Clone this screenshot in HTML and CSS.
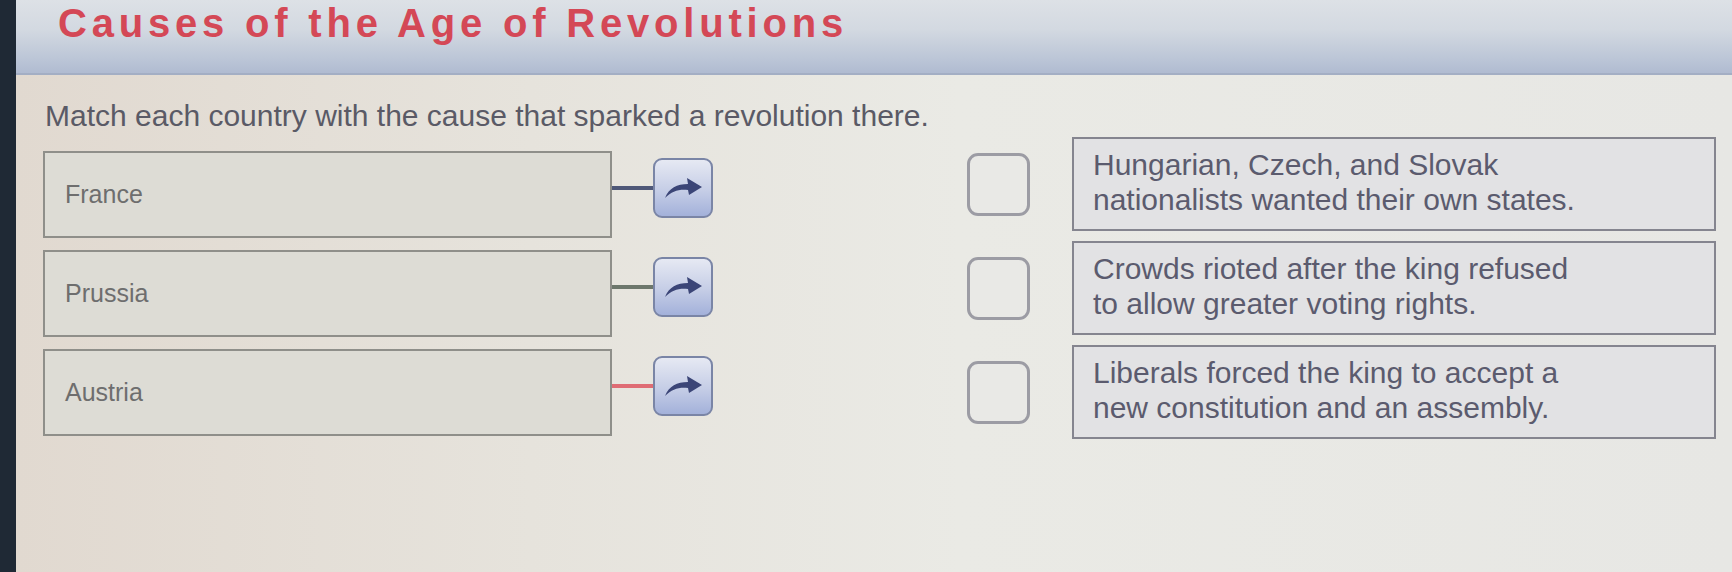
FILE: index.html
```html
<!DOCTYPE html>
<html>

<head>
    <meta charset="UTF-8">
    <meta name="viewport" content="width=device-width, initial-scale=1.0">
    <title>Causes of the Age of Revolutions</title>
    <link rel="stylesheet" href="styles.css">
</head>

<body>
    <div class="page">
        <header class="banner">
            <h1>Causes of the Age of Revolutions</h1>
        </header>

        <main class="content">
            <p class="prompt">Match each country with the cause that sparked a revolution there.</p>

            <div class="quiz">
                <!-- countries, each with a drag handle -->
                <div class="sources">
                    <div class="source">
                        <div class="label">France</div>
                        <div class="handle">
                            <span class="wire wire-blue"></span>
                            <button type="button" class="drag">
                                <svg viewBox="0 0 40 24" width="40" height="24"><path d="M2 22 C6 12 14 8 25 8 L24 2 L39 11 L26 19 L25 14 C16 13 9 15 2 22 Z" /></svg>
                            </button>
                        </div>
                    </div>
                    <div class="source">
                        <div class="label">Prussia</div>
                        <div class="handle">
                            <span class="wire wire-green"></span>
                            <button type="button" class="drag">
                                <svg viewBox="0 0 40 24" width="40" height="24"><path d="M2 22 C6 12 14 8 25 8 L24 2 L39 11 L26 19 L25 14 C16 13 9 15 2 22 Z" /></svg>
                            </button>
                        </div>
                    </div>
                    <div class="source">
                        <div class="label">Austria</div>
                        <div class="handle">
                            <span class="wire wire-red"></span>
                            <button type="button" class="drag">
                                <svg viewBox="0 0 40 24" width="40" height="24"><path d="M2 22 C6 12 14 8 25 8 L24 2 L39 11 L26 19 L25 14 C16 13 9 15 2 22 Z" /></svg>
                            </button>
                        </div>
                    </div>
                </div>

                <!-- causes, each with an empty drop slot -->
                <div class="targets">
                    <div class="target">
                        <span class="slot"></span>
                        <div class="answer">Hungarian, Czech, and Slovak<br>nationalists wanted their own states.</div>
                    </div>
                    <div class="target">
                        <span class="slot"></span>
                        <div class="answer">Crowds rioted after the king refused<br>to allow greater voting rights.</div>
                    </div>
                    <div class="target">
                        <span class="slot"></span>
                        <div class="answer">Liberals forced the king to accept a<br>new constitution and an assembly.</div>
                    </div>
                </div>
            </div>
        </main>
    </div>
</body>

</html>
```

FILE: styles.css
```css
body {
    margin: 0;
    background-color: #1f2935;
    font-family: "Liberation Sans", Arial, sans-serif;
}

.page {
    margin-left: 16px;
    min-height: 100vh;
    background: linear-gradient(90deg, #e1d9d0 0%, #e6e3dc 30%, #eaeae5 55%, #e7e7e4 100%);
}

.banner {
    height: 73px;
    padding-left: 42px;
    background: linear-gradient(180deg, #dde1e6 0%, #d3d9e1 40%, #bcc6d7 80%, #b0bbd1 100%);
    border-bottom: 2px solid #a3aec4;
}

.banner h1 {
    margin: 0;
    color: #d44856;
    font-size: 40px;
    line-height: 46px;
    font-weight: bold;
    letter-spacing: 4.8px;
}

.content {
    padding: 23px 16px 0 27px;
}

.prompt {
    margin: 0 0 3px 2px;
    color: #5a5a66;
    font-size: 30px;
    line-height: 36px;
}

.quiz {
    display: flex;
    justify-content: space-between;
}

.sources {
    display: flex;
    flex-direction: column;
    gap: 12px;
    margin-top: 14px;
}

.source {
    display: flex;
    align-items: flex-start;
}

.label {
    width: 569px;
    height: 87px;
    box-sizing: border-box;
    display: flex;
    align-items: center;
    padding-left: 20px;
    background-color: #dddcd5;
    border: 2px solid #8f8f8a;
    color: #6e6e6e;
    font-size: 25px;
}

.handle {
    display: flex;
    align-items: center;
    height: 60px;
    margin-top: 7px;
}

.wire {
    width: 41px;
    height: 4px;
}

.wire-blue {
    background-color: #4f5878;
}

.wire-green {
    background-color: #6d776c;
}

.wire-red {
    background-color: #df6c74;
}

.drag {
    width: 60px;
    height: 60px;
    padding: 0;
    display: flex;
    align-items: center;
    justify-content: center;
    background: linear-gradient(180deg, #e6e9f3 0%, #c5cde6 55%, #a3b1da 100%);
    border: 2px solid #7a85a6;
    border-radius: 9px;
}

.drag svg {
    fill: #3b4577;
}

.targets {
    display: flex;
    flex-direction: column;
    gap: 10px;
}

.target {
    display: flex;
    align-items: center;
    gap: 42px;
    height: 94px;
}

.slot {
    width: 63px;
    height: 63px;
    box-sizing: border-box;
    border: 3px solid #9c9ca4;
    border-radius: 11px;
    background-color: #e9e9e6;
}

.answer {
    width: 644px;
    height: 94px;
    box-sizing: border-box;
    padding: 8px 19px;
    background-color: #e2e2e4;
    border: 2px solid #85858f;
    color: #5b5b6e;
    font-size: 30px;
    line-height: 35px;
}
```
